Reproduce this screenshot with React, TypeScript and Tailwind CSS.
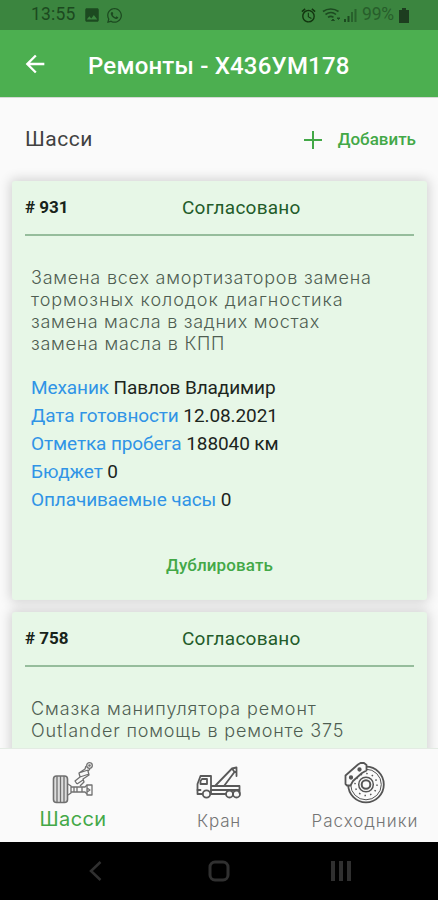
import type { ReactNode } from "react"
import { FaWhatsapp } from "react-icons/fa"
import { MdArrowBack, MdImage, MdAccessAlarm } from "react-icons/md"

function StatusBar() {
  return (
    <div className="flex h-[30px] shrink-0 items-center justify-between bg-[#3b853f] pr-[29px] pl-[31px] text-[#1c4a20]">
      <div className="flex items-center">
        <span className="w-[45px] text-[17.5px] leading-none tracking-[0.2px]">13:55</span>
        <MdImage size={18} className="ml-[7px]" />
        <FaWhatsapp size={17} className="ml-[5px]" />
      </div>
      <div className="flex items-center">
        <MdAccessAlarm size={17} className="text-[#12350f]" />
        <svg width="20" height="17" viewBox="0 0 20 17" fill="none" stroke="currentColor" strokeWidth="1.6" className="ml-[5px]">
          <path d="M1 4.500C5.500 1.200 12 1.200 16.500 4.500" />
          <path d="M3.500 7.500C7 5 11 5 14 7.500" />
          <path d="M6 10.300C8 9 9.500 9 11.500 10.300" />
          <path d="M9.500 13.500l1.500-1.500 1.500 1.500zM15 11l1.500 1.500L18 11z" fill="currentColor" strokeWidth="1" />
        </svg>
        <svg width="13" height="14" viewBox="0 0 13 14" fill="currentColor" className="ml-[2px]">
          <path d="M0 11h2v3H0zM3.500 8h2v6h-2z" />
          <path d="M7 4h2v10H7zM10.500 1h2v13h-2z" opacity=".6" />
        </svg>
        <span className="ml-[5px] w-[35px] text-[17.5px] leading-none tracking-[-0.2px] text-[#275e2b]">99%</span>
        <svg width="10" height="15" viewBox="0 0 10 15" fill="#1d3d1f" className="ml-[2px]">
          <path d="M3 0h4v2h3v13H0V2h3z" />
        </svg>
      </div>
    </div>
  )
}

function Card({ id, children }: { id: string; children: ReactNode }) {
  return (
    <div className="rounded-[3px] bg-[#e7f7e7] px-[13px] shadow-[0_0_12px_2px_rgba(0,0,0,0.16)]">
      <div className="flex h-[55px] items-center border-b-2 border-[#96bd9c] pt-px">
        <span className="w-[157px] text-[17px] font-bold text-[#18231a]"># {id}</span>
        <span className="text-[19px] tracking-[0.25px] text-[#235c2a]">Согласовано</span>
      </div>
      {children}
    </div>
  )
}

function Field({ label, value }: { label: string; value: string }) {
  return (
    <div className="h-7 leading-7 tracking-[-0.1px] whitespace-nowrap text-[#1c251d]">
      <span className="text-[#3094e6]">{label}</span> {value}
    </div>
  )
}

function AxleIcon() {
  return (
    <svg width="42" height="42" viewBox="0 0 42 42" fill="none" stroke="#707070" strokeWidth="1.3" strokeLinejoin="round">
      <rect x="1.500" y="14" width="14" height="26.500" rx="3" fill="#ddd" strokeWidth="1.600" />
      <path d="M5 14v27M8.500 14v27M12 14v27" />
      <path d="M16 22l3 2v7l-3 2M19 25h14l2-2M19 30h14l2 2M22 25v5M25 25v5M30 25v5" />
      <path d="M35 23h5v10h-5zM35 26l3 2-3 2" />
      <path d="M25 22l-2-3 5-4-1-4 6-4 1-3M28 24l4-4-1-3 6-4-1-4 2-2M25 22l6-4M28 15l9-3M27 11l9-3" />
      <circle cx="37.500" cy="3.500" r="2.800" />
      <circle cx="37.500" cy="3.500" r=".7" />
    </svg>
  )
}

function CraneIcon() {
  return (
    <svg width="46" height="33" viewBox="0 0 46 33" fill="none" stroke="#595959" strokeWidth="1.8" strokeLinejoin="round" strokeLinecap="round">
      <path d="M6.500 28H1.500V18l3-8H15v18M15 20h28.500v7M15 28h14.500" />
      <path d="M4.500 18v-3l1.500-2h5v5zM1.500 24h3M15 24h28" />
      <path d="M19 20L36 2.500 40.500 1.500V10M28 20L38.500 6M36 2.500L38.500 6h2" />
      <circle cx="10.500" cy="28" r="3.700" />
      <circle cx="33.500" cy="28" r="3.500" />
      <circle cx="40.500" cy="28" r="3.500" />
    </svg>
  )
}

function BrakeIcon() {
  return (
    <svg width="42" height="42" viewBox="0 0 42 42" fill="none" stroke="#555" strokeWidth="1.5" strokeLinejoin="round">
      <circle cx="22" cy="22.500" r="17.800" strokeWidth="1.800" />
      <circle cx="22" cy="22.500" r="15.300" strokeWidth="1" />
      <circle cx="22" cy="22.500" r="11" strokeDasharray="1.5 4.250" />
      <circle cx="22" cy="22.500" r="7.300" />
      <circle cx="22" cy="22.500" r="4.300" strokeWidth="2" />
      <path d="M1.500 22V13.500L14 2.500 16.500 1H20l2.500 2v5.500L18 11 9 19 6.500 23.500H3z" fill="#fafafa" strokeWidth="1.800" />
      <circle cx="7" cy="15.500" r="1.400" fill="#555" />
      <circle cx="15.500" cy="7.500" r="1.400" fill="#555" />
    </svg>
  )
}

export default function App() {
  return (
    <div className="flex h-[900px] w-[438px] flex-col overflow-hidden bg-[#fafafa] font-['Roboto',sans-serif]">
      <StatusBar />
      <header className="flex h-[67px] shrink-0 items-center bg-[#4caf50] pt-px pl-[21px] text-white">
        <MdArrowBack size={28} />
        <h1 className="ml-[39px] pt-[3px] text-[24px] font-medium tracking-[0.2px] whitespace-nowrap">Ремонты - Х436УМ178</h1>
      </header>

      <main className="min-h-0 flex-1 overflow-hidden border-t border-[#d5d9d5]">
        <div className="flex h-[83px] items-center justify-between pr-[22px] pl-[25px]">
          <h2 className="pt-px text-[21px] tracking-[0.5px] text-[#414141]">Шасси</h2>
          <button className="flex items-center gap-4 text-[17px] font-medium text-[#43a847]">
            <svg width="18" height="18" viewBox="0 0 18 18" stroke="currentColor" strokeWidth="2">
              <path d="M9 0v18M0 9h18" />
            </svg>
            Добавить
          </button>
        </div>

        <div className="flex flex-col gap-3 pr-[11px] pl-[12px]">
          <Card id="931">
            <div className="flex h-[364px] flex-col pt-[31px] pl-[6px]">
              <div className="flex flex-col font-['Inter',sans-serif] text-[18px] leading-[22px] font-light whitespace-nowrap text-[#4f5e52]">
                <span className="tracking-[0.78px]">Замена всех амортизаторов замена</span>
                <span className="tracking-[0.95px]">тормозных колодок диагностика</span>
                <span className="tracking-[0.7px]">замена масла в задних мостах</span>
                <span className="tracking-[0.75px]">замена масла в КПП</span>
              </div>
              <div className="mt-[19px] text-[19px]">
                <Field label="Механик" value="Павлов Владимир" />
                <Field label="Дата готовности" value="12.08.2021" />
                <Field label="Отметка пробега" value="188040 км" />
                <Field label="Бюджет" value="0" />
                <Field label="Оплачиваемые часы" value="0" />
              </div>
              <button className="mt-[39px] pr-[6px] text-[17px] font-medium tracking-[0.1px] text-[#43a847]">Дублировать</button>
            </div>
          </Card>

          <Card id="758">
            <div className="flex h-[364px] flex-col pt-[31px] pl-[6px] font-['Inter',sans-serif] text-[18px] leading-[22px] font-light whitespace-nowrap text-[#4f5e52]">
              <span className="tracking-[0.9px]">Смазка манипулятора ремонт</span>
              <span className="tracking-[0.83px]">Outlander помощь в ремонте 375</span>
            </div>
          </Card>
        </div>
      </main>

      <nav className="z-10 grid h-[94px] shrink-0 grid-cols-3 border-t border-[#e3ebe3] bg-[#fafafa] font-['Inter',sans-serif] whitespace-nowrap">
        <div className="flex flex-col items-center pt-[13px]">
          <AxleIcon />
          <span className="mt-[3px] text-[20px] leading-6 tracking-[0.4px] text-[#43a847]">Шасси</span>
        </div>
        <div className="flex flex-col items-center pt-[17px]">
          <CraneIcon />
          <span className="mt-[10px] text-[17px] leading-6 font-light tracking-[0.8px] text-[#757575]">Кран</span>
        </div>
        <div className="flex flex-col items-center pt-[13px]">
          <BrakeIcon />
          <span className="mt-[5px] text-[17px] leading-6 font-light tracking-[1px] text-[#757575]">Расходники</span>
        </div>
      </nav>

      <div className="grid h-[58px] shrink-0 grid-cols-3 items-center bg-black text-[#303030]">
        <svg width="14" height="20" viewBox="0 0 14 20" fill="none" stroke="currentColor" strokeWidth="2.500" className="ml-[88px]">
          <path d="M12.500 1L3 10l9.500 9" />
        </svg>
        <svg width="22" height="22" viewBox="0 0 22 22" fill="none" stroke="currentColor" className="mx-auto">
          <rect x="2" y="2" width="18" height="18" rx="5" strokeWidth="3" />
        </svg>
        <svg width="20" height="20" viewBox="0 0 20 20" fill="currentColor" className="ml-[39px]">
          <path d="M0 0h4v20H0zM8 0h4v20H8zM16 0h4v20h-4z" />
        </svg>
      </div>
    </div>
  )
}
